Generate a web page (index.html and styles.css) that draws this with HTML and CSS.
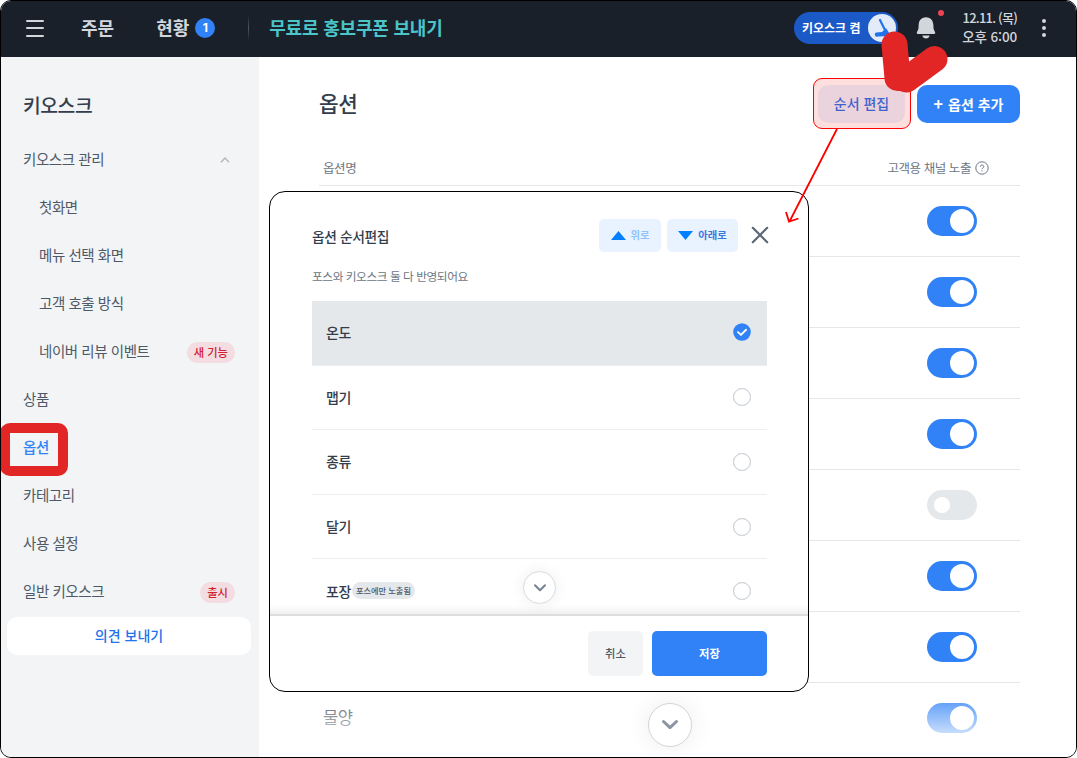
FILE: index.html
```
<!DOCTYPE html>
<html lang="ko">
<head>
    <meta charset="UTF-8">
    <meta name="viewport" content="width=device-width, initial-scale=1.0">
    <title>키오스크 옵션</title>
    <link rel="stylesheet" href="styles.css">
</head>
<body>
<div class="app">

    <!-- 상단 바 -->
    <header class="topbar">
        <div class="menu-icon"><span></span><span></span><span></span></div>
        <nav class="topnav">
            <span class="nav-order">주문</span>
            <span class="nav-status">현황</span>
            <span class="count">1</span>
        </nav>
        <span class="divider"></span>
        <span class="promo">무료로 홍보쿠폰 보내기</span>
        <div class="topbar-right">
            <div class="kiosk-pill">
                <span>키오스크 켬</span>
                <svg width="28" height="28" viewBox="0 0 28 28">
                    <circle cx="14" cy="14" r="14" fill="#e3ebf8"/>
                    <path d="M12 6L18 18" stroke="#2272eb" stroke-width="2.200" stroke-linecap="round"/>
                    <path d="M8 18.500l6-.5 4-4 5 8-13 .5a2.200 2.200 0 0 1-2-4z" fill="#2272eb"/>
                </svg>
            </div>
            <div class="bell">
                <svg width="20" height="24" viewBox="0 0 20 24" fill="#d1d6db">
                    <path d="M10 1.300c-4.200 0-7.100 3-7.300 7.200L2.400 13 .9 16.200c-.4 1 0 1.700 1 1.700h16.200c1 0 1.400-.7 1-1.700L17.600 13l-.3-4.500C17.100 4.300 14.200 1.300 10 1.300z"/>
                    <path d="M6.300 19.500h7.400c-.4 1.900-1.900 3-3.700 3s-3.300-1.100-3.700-3z"/>
                </svg>
                <span class="bell-dot"></span>
            </div>
            <div class="clock"><div class="date">12.11. (목)</div><div>오후 6:00</div></div>
            <div class="more"><span></span><span></span><span></span></div>
        </div>
    </header>

    <div class="body">
        <!-- 사이드 메뉴 -->
        <aside class="sidebar">
            <h1>키오스크</h1>
            <ul>
                <li>키오스크 관리
                    <svg class="caret" width="12" height="12" viewBox="0 0 12 12" fill="none" stroke="#b0b8c1" stroke-width="1.5"><path d="M2 9.300L6 5l4 4.300"/></svg>
                </li>
                <li class="sub">첫화면</li>
                <li class="sub">메뉴 선택 화면</li>
                <li class="sub">고객 호출 방식</li>
                <li class="sub">네이버 리뷰 이벤트 <span class="tag">새 기능</span></li>
                <li>상품</li>
                <li class="active">옵션</li>
                <li>카테고리</li>
                <li>사용 설정</li>
                <li>일반 키오스크 <span class="tag">출시</span></li>
            </ul>
            <button class="feedback">의견 보내기</button>
        </aside>

        <!-- 옵션 목록 -->
        <main class="content">
            <div class="content-head">
                <h2>옵션</h2>
                <div class="actions">
                    <button class="btn-order">순서 편집</button>
                    <button class="btn-add"><span class="plus">+</span>옵션 추가</button>
                </div>
            </div>
            <div class="table-head">
                <span>옵션명</span>
                <span class="channel">고객용 채널 노출
                    <svg width="14" height="14" viewBox="0 0 14 14" fill="none" stroke="#6b7684"><circle cx="7" cy="7" r="6.200"/><path d="M5.200 5.700c0-2.300 3.600-2.300 3.600 0 0 1.300-1.800 1.200-1.800 2.500M7 9.300v1.100"/></svg>
                </span>
            </div>
            <div class="row"><i class="toggle on"></i></div>
            <div class="row"><i class="toggle on"></i></div>
            <div class="row"><i class="toggle on"></i></div>
            <div class="row"><i class="toggle on"></i></div>
            <div class="row"><i class="toggle"></i></div>
            <div class="row"><i class="toggle on"></i></div>
            <div class="row"><i class="toggle on"></i></div>
            <div class="row last"><span>물양</span><i class="toggle on"></i></div>
            <div class="fade"></div>
            <div class="scroll-down big">
                <svg width="18" height="12" viewBox="0 0 18 12" fill="none" stroke="#8b95a1" stroke-width="3" stroke-linecap="round" stroke-linejoin="round"><path d="M2.500 2.500L9 8.700l6.500-6.200"/></svg>
            </div>
        </main>
    </div>

    <!-- 순서 편집 팝업 -->
    <section class="modal">
        <div class="modal-head">
            <h3>옵션 순서편집</h3>
            <button class="move up"><svg width="15" height="9" viewBox="0 0 15 9"><path d="M0 9L7.500 0 15 9z" fill="#0080ff"/></svg>위로</button>
            <button class="move down"><svg width="15" height="9" viewBox="0 0 15 9"><path d="M0 0h15L7.500 9z" fill="#0080ff"/></svg>아래로</button>
            <svg class="close" width="18" height="18" viewBox="0 0 18 18" stroke="#5a6675" stroke-width="2.200" stroke-linecap="round"><path d="M1.800 1.800l14.400 14.400M16.200 1.800L1.800 16.200"/></svg>
        </div>
        <p class="modal-desc">포스와 키오스크 둘 다 반영되어요</p>
        <div class="modal-list">
            <div class="item selected">온도
                <svg width="18" height="18" viewBox="0 0 18 18"><circle cx="9" cy="9" r="8.800" fill="#3182f6"/><path d="M5 9.100l2.900 2.800 5.200-5.100" fill="none" stroke="#fff" stroke-width="1.900" stroke-linecap="round" stroke-linejoin="round"/></svg>
            </div>
            <div class="item">맵기<i class="radio"></i></div>
            <div class="item">종류<i class="radio"></i></div>
            <div class="item">달기<i class="radio"></i></div>
            <div class="item">포장<span class="pos-only">포스에만 노출됨</span><i class="radio"></i></div>
            <div class="scroll-down small">
                <svg width="14" height="10" viewBox="0 0 14 10" fill="none" stroke="#758291" stroke-width="2" stroke-linecap="round" stroke-linejoin="round"><path d="M2 2.300l5 4.900 5-4.900"/></svg>
            </div>
        </div>
        <div class="modal-foot">
            <button class="cancel">취소</button>
            <button class="save">저장</button>
        </div>
    </section>

    <!-- 안내 표시 -->
    <div class="mark-menu"></div>
    <div class="mark-button"></div>
    <svg class="mark-arrows" width="1077" height="758" viewBox="0 0 1077 758" fill="none">
        <path d="M837 129L789.500 221.500M786 212l3 9.500 9.500-3" stroke="#f00" stroke-width="1.800"/>
        <path d="M894.500 44.500l3 33.500M906.500 79.500L934.500 59" stroke="#e22626" stroke-width="26" stroke-linecap="round"/>
    </svg>
</div>
</body>
</html>
```
FILE: styles.css
```
* {
    box-sizing: border-box;
}

body {
    margin: 0;
    background: #fff;
    font-family: "Noto Sans CJK KR", sans-serif;
    font-size: 14.500px;
    letter-spacing: -0.03em;
    color: #4e5968;
}

h1, h2, h3, p, ul {
    margin: 0;
    padding: 0;
}

button {
    border: none;
    padding: 0;
    font-family: inherit;
}

.app {
    position: relative;
    width: 1077px;
    height: 758px;
    border: 1px solid #000;
    border-radius: 11px;
    overflow: hidden;
    display: flex;
    flex-direction: column;
}

/* 상단 바 */
.topbar {
    flex: none;
    height: 56px;
    background: #19202a;
    display: flex;
    align-items: center;
    padding: 0 30px 2px 25px;
    color: #d1d6db;
    font-weight: 500;
}

.menu-icon {
    width: 18px;
    height: 17px;
    display: flex;
    flex-direction: column;
    justify-content: space-between;
}

.menu-icon span {
    height: 2px;
    border-radius: 1px;
    background: #d1d6db;
}

.topnav {
    display: flex;
    align-items: center;
    margin-left: 37px;
    font-size: 18px;
    letter-spacing: 0;
    font-weight: 700;
}

.nav-order,
.nav-status,
.promo {
    padding-bottom: 2px;
}

.nav-status {
    margin-left: 42px;
}

.count {
    width: 20px;
    height: 20px;
    margin-left: 6px;
    border-radius: 50%;
    background: #3182f6;
    color: #fff;
    font: bold 12px/20px Inter, sans-serif;
    text-align: center;
}

.divider {
    width: 1px;
    height: 26px;
    margin: 0 20px 0 33px;
    background: linear-gradient(#19202a, #4e5560, #19202a);
}

.promo {
    font-size: 18px;
    letter-spacing: -0.2px;
    font-weight: 700;
    color: #4cc5c9;
}

.topbar-right {
    margin-left: auto;
    display: flex;
    align-items: center;
}

.kiosk-pill {
    width: 104px;
    height: 32px;
    margin-right: 18px;
    padding: 0 2px 0 8px;
    border-radius: 16px;
    background: #1b5ac6;
    display: flex;
    align-items: center;
    justify-content: space-between;
    font-size: 12px;
    letter-spacing: 0;
    font-weight: 700;
    white-space: nowrap;
    color: #fff;
}

.kiosk-pill span {
    padding-bottom: 2px;
}

.bell {
    position: relative;
    width: 20px;
    height: 24px;
}

.bell-dot {
    position: absolute;
    left: 22px;
    top: -6px;
    width: 6px;
    height: 6px;
    border-radius: 50%;
    background: #f04452;
}

.clock {
    width: 56px;
    margin-left: 25px;
    padding-bottom: 2px;
    font-size: 13.500px;
    letter-spacing: -0.01em;
    line-height: 18px;
    text-align: right;
    white-space: nowrap;
}

.date {
    font-size: 13px;
    letter-spacing: -0.06em;
}

.more {
    margin-left: 25px;
    display: flex;
    flex-direction: column;
    gap: 3px;
}

.more span {
    width: 4px;
    height: 4px;
    border-radius: 50%;
    background: #d1d6db;
}

/* 사이드 메뉴 */
.body {
    flex: 1;
    min-height: 0;
    display: flex;
}

.sidebar {
    width: 258px;
    background: #f2f4f6;
    padding: 34px 8px 0 6px;
}

.sidebar h1 {
    padding-left: 16px;
    font-size: 19.300px;
    line-height: 29px;
    font-weight: 500;
    color: #333d4b;
}

.sidebar ul {
    margin-top: 15px;
    list-style: none;
}

.sidebar li {
    height: 48px;
    padding: 0 16px 1px;
    display: flex;
    align-items: center;
    justify-content: space-between;
}

.sidebar li.sub {
    padding-left: 32px;
}

.sidebar li.active {
    color: #3182f6;
    font-weight: 500;
}

.caret {
    margin-right: 4px;
}

.tag {
    margin-top: 3px;
    padding: 0 7px 1px;
    border-radius: 11px;
    background: #f3dde1;
    color: #d22030;
    font-size: 11.300px;
    letter-spacing: 0;
    line-height: 20px;
    font-weight: 500;
}

.feedback {
    width: 244px;
    height: 38px;
    margin-top: 2px;
    padding-bottom: 3px;
    border-radius: 10px;
    background: #fff;
    color: #2272eb;
    font-size: 14px;
    font-weight: 500;
}

/* 옵션 목록 */
.content {
    position: relative;
    flex: 1;
    padding: 28px 56px 0 60px;
}

.content-head {
    display: flex;
    justify-content: space-between;
    height: 66px;
}

.content-head h2 {
    font-size: 21.300px;
    line-height: 35px;
    font-weight: 500;
    color: #333d4b;
}

.actions {
    display: flex;
    gap: 12px;
}

.actions button {
    height: 38px;
    padding-bottom: 3px;
    border-radius: 10px;
    font-size: 14px;
}

.btn-order {
    width: 87px;
    background: #e8f3ff;
    color: #2272eb;
    font-weight: 500;
}

.btn-add {
    width: 103px;
    background: #3182f6;
    color: #fff;
    font-weight: 700;
}

.plus {
    margin-right: 5px;
    font-size: 16px;
}

.table-head {
    height: 35px;
    padding: 0 31px 0 4px;
    border-bottom: 1px solid #e5e8eb;
    display: flex;
    justify-content: space-between;
    font-size: 12.500px;
    line-height: 34px;
    color: #6b7684;
}

.channel {
    display: flex;
    align-items: center;
    gap: 4px;
}

.row {
    height: 71px;
    padding: 0 43px 0 4px;
    border-bottom: 1px solid #e5e8eb;
    display: flex;
    align-items: center;
}

.row.last {
    height: 70px;
    border: none;
    font-size: 16.600px;
    color: #333d4b;
}

.row.last span {
    padding-bottom: 3px;
}

.toggle {
    width: 50px;
    height: 30px;
    margin-left: auto;
    padding: 7px;
    border-radius: 15px;
    background: #e5e8eb;
}

.toggle::before {
    content: "";
    display: block;
    width: 16px;
    height: 16px;
    border-radius: 50%;
    background: #fff;
}

.toggle.on {
    padding: 3px;
    background: #3182f6;
}

.toggle.on::before {
    width: 24px;
    height: 24px;
    margin-left: 20px;
}

.fade {
    position: absolute;
    left: 0;
    right: 0;
    bottom: 0;
    height: 64px;
    background: linear-gradient(rgba(255, 255, 255, 0.1), #fff 90%);
}

.scroll-down {
    position: absolute;
    border-radius: 50%;
    background: #fff;
    display: flex;
    align-items: center;
    justify-content: center;
}

.scroll-down.big {
    left: 389px;
    bottom: 10px;
    width: 44px;
    height: 44px;
    border: 1px solid #d1d6db;
    box-shadow: 0 0 24px rgba(0, 20, 40, 0.08);
}

/* 순서 편집 팝업 */
.modal {
    position: absolute;
    left: 268px;
    top: 190px;
    width: 540px;
    height: 501px;
    border: 1px solid #000;
    border-radius: 16px;
    background: #fff;
    overflow: hidden;
    display: flex;
    flex-direction: column;
}

.modal-head {
    height: 60px;
    padding: 27px 39px 0 42px;
    display: flex;
    align-items: center;
}

.modal-head h3 {
    margin-right: auto;
    font-size: 13.800px;
    font-weight: 500;
    color: #333d4b;
}

.move {
    height: 33px;
    padding-bottom: 2px;
    border-radius: 5px;
    background: #e8f3ff;
    display: flex;
    align-items: center;
    justify-content: center;
    gap: 5px;
    font-size: 10.300px;
    font-weight: 700;
}

.move svg {
    position: relative;
    top: 1px;
}

.move.up {
    width: 62px;
    color: #90c2ff;
}

.move.down {
    width: 71px;
    margin: 0 13px 0 6px;
    color: #3a78e0;
}

.close {
    margin-bottom: 2px;
}

.modal-desc {
    height: 49px;
    padding: 15px 42px 0;
    font-size: 11.700px;
    line-height: 18px;
    color: #6b7684;
}

.modal-list {
    position: relative;
    flex: none;
    height: 315px;
    padding: 0 41px 0 42px;
    border-bottom: 2px solid #dcdddf;
    overflow: hidden;
}

.modal-list::after {
    content: "";
    position: absolute;
    left: 0;
    right: 0;
    bottom: 0;
    height: 9px;
    background: linear-gradient(rgba(0, 0, 0, 0), rgba(0, 0, 0, 0.06));
}

.item {
    height: 64.600px;
    padding: 0 16px 1px 14px;
    border-bottom: 1px solid #eceef0;
    display: flex;
    align-items: center;
    font-size: 14px;
    font-weight: 500;
    color: #333d4b;
}

.item.selected {
    background: #e5e8eb;
}

.item svg {
    margin-left: auto;
}

.radio {
    width: 18px;
    height: 18px;
    margin-top: 1px;
    margin-left: auto;
    border: 1.500px solid #d1d6db;
    outline: 0.500px solid #d1d6db;
    outline-offset: -1.500px;
    border-radius: 50%;
}

.pos-only {
    margin-left: 1px;
    padding: 0 4px;
    border-radius: 9px;
    background: #e5e8eb;
    font-size: 8.200px;
    letter-spacing: 0;
    line-height: 17px;
    color: #4e5968;
}

.scroll-down.small {
    left: 253px;
    top: 270px;
    width: 33px;
    height: 33px;
    border: 1px solid #d6dbe0;
    box-shadow: 0 0 16px rgba(0, 20, 40, 0.07);
}

.modal-foot {
    padding: 15px 41px 0;
    display: flex;
    justify-content: flex-end;
    gap: 9px;
}

.modal-foot button {
    height: 45px;
    padding-bottom: 1px;
    border-radius: 5px;
    font-size: 11.300px;
    font-weight: 500;
}

.cancel {
    width: 55px;
    background: #f2f4f6;
    color: #4e5968;
}

.modal-foot .save {
    width: 115px;
    background: #3182f6;
    color: #fff;
    font-weight: 700;
}

/* 안내 표시 */
.mark-menu {
    position: absolute;
    left: -1px;
    top: 422px;
    width: 68px;
    height: 53px;
    border: 10px solid #e22626;
    border-radius: 10px;
}

.mark-button {
    position: absolute;
    left: 812px;
    top: 77px;
    width: 98px;
    height: 51px;
    border: 1px solid #f00;
    border-radius: 9px;
    background: rgba(255, 0, 0, 0.13);
}

.mark-arrows {
    position: absolute;
    left: -1px;
    top: -1px;
}
```
